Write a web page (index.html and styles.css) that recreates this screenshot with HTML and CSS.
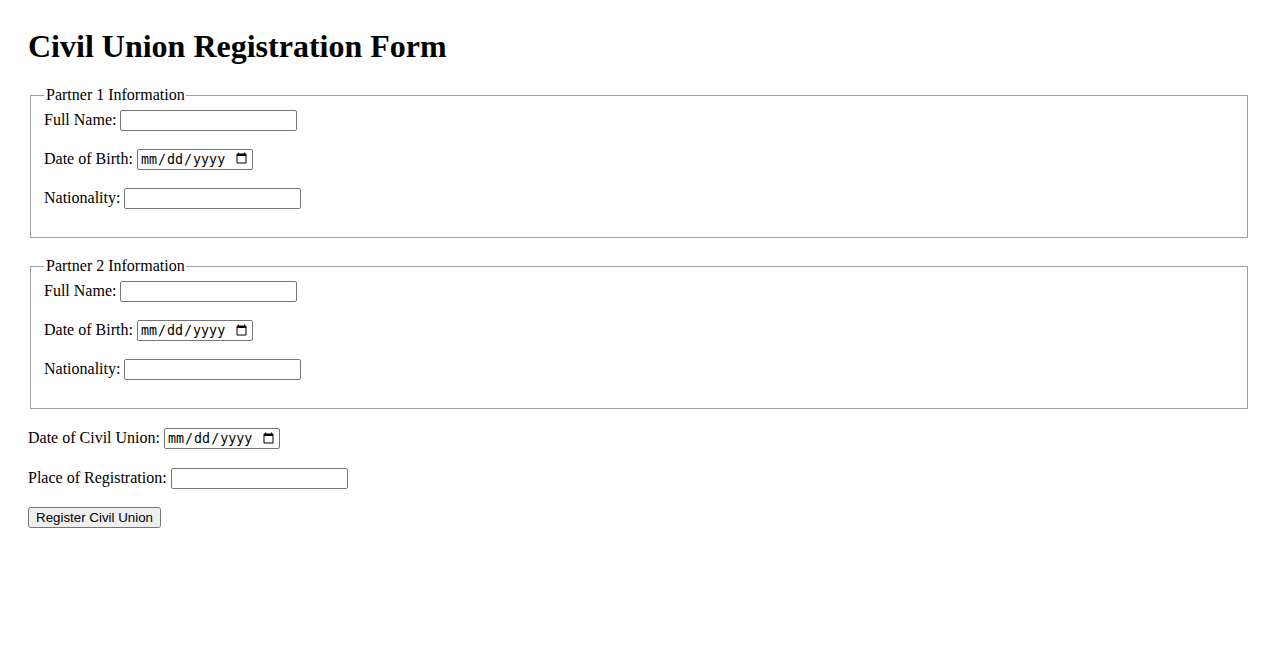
FILE: index.html
```html
<!DOCTYPE html>
<html lang="en">
<head>
<meta charset="utf-8">
<title>Civil Union Registration Form</title>
<link rel="stylesheet" href="styles.css">
</head>
<body>
<h1 class="title">Civil Union Registration Form</h1>
<form class="form">
  <fieldset class="group">
    <legend>Partner 1 Information</legend>
    <div class="row"><label for="p1name">Full Name:</label> <input type="text" id="p1name"></div>
    <div class="row"><label for="p1dob">Date of Birth:</label> <input type="date" id="p1dob"></div>
    <div class="row"><label for="p1nat">Nationality:</label> <input type="text" id="p1nat"></div>
  </fieldset>
  <fieldset class="group">
    <legend>Partner 2 Information</legend>
    <div class="row"><label for="p2name">Full Name:</label> <input type="text" id="p2name"></div>
    <div class="row"><label for="p2dob">Date of Birth:</label> <input type="date" id="p2dob"></div>
    <div class="row"><label for="p2nat">Nationality:</label> <input type="text" id="p2nat"></div>
  </fieldset>
  <div class="row row-wide"><label for="cudate">Date of Civil Union:</label> <input type="date" id="cudate"></div>
  <div class="row"><label for="place">Place of Registration:</label> <input type="text" id="place"></div>
  <button type="submit" class="submit">Register Civil Union</button>
</form>
</body>
</html>
```
FILE: styles.css
```css
body {
  margin: 0;
  padding: 28px;
  font-family: "Liberation Serif", "Times New Roman", serif;
  font-size: 16px;
  color: #000;
  background: #fff;
}
.title {
  font-size: 32px;
  font-weight: bold;
  margin: 0 0 21px;
}
.group {
  margin: 0 2px 19.5px;
  padding: 0.35em 0.75em 0.625em 13px;
  border: 1px solid #a0a0a0;
}
.group legend {
  padding: 0 1px 0 2px;
}
.row {
  margin-bottom: 18px;
}
.row-wide {
  margin-bottom: 19px;
}
input[type="text"], input[type="date"] {
  font-size: 13.33px;
  box-sizing: border-box;
  height: 21px;
  border: 1px solid #767676;
  border-radius: 2px;
}
input[type="text"] {
  width: 177px;
}
input[type="date"] {
  width: 116px;
  padding: 1px 2px;
}
.submit {
  font-family: "Liberation Sans", Arial, sans-serif;
  font-size: 13.33px;
  box-sizing: border-box;
  height: 21px;
  padding: 1px 6px;
  vertical-align: top;
}
```
